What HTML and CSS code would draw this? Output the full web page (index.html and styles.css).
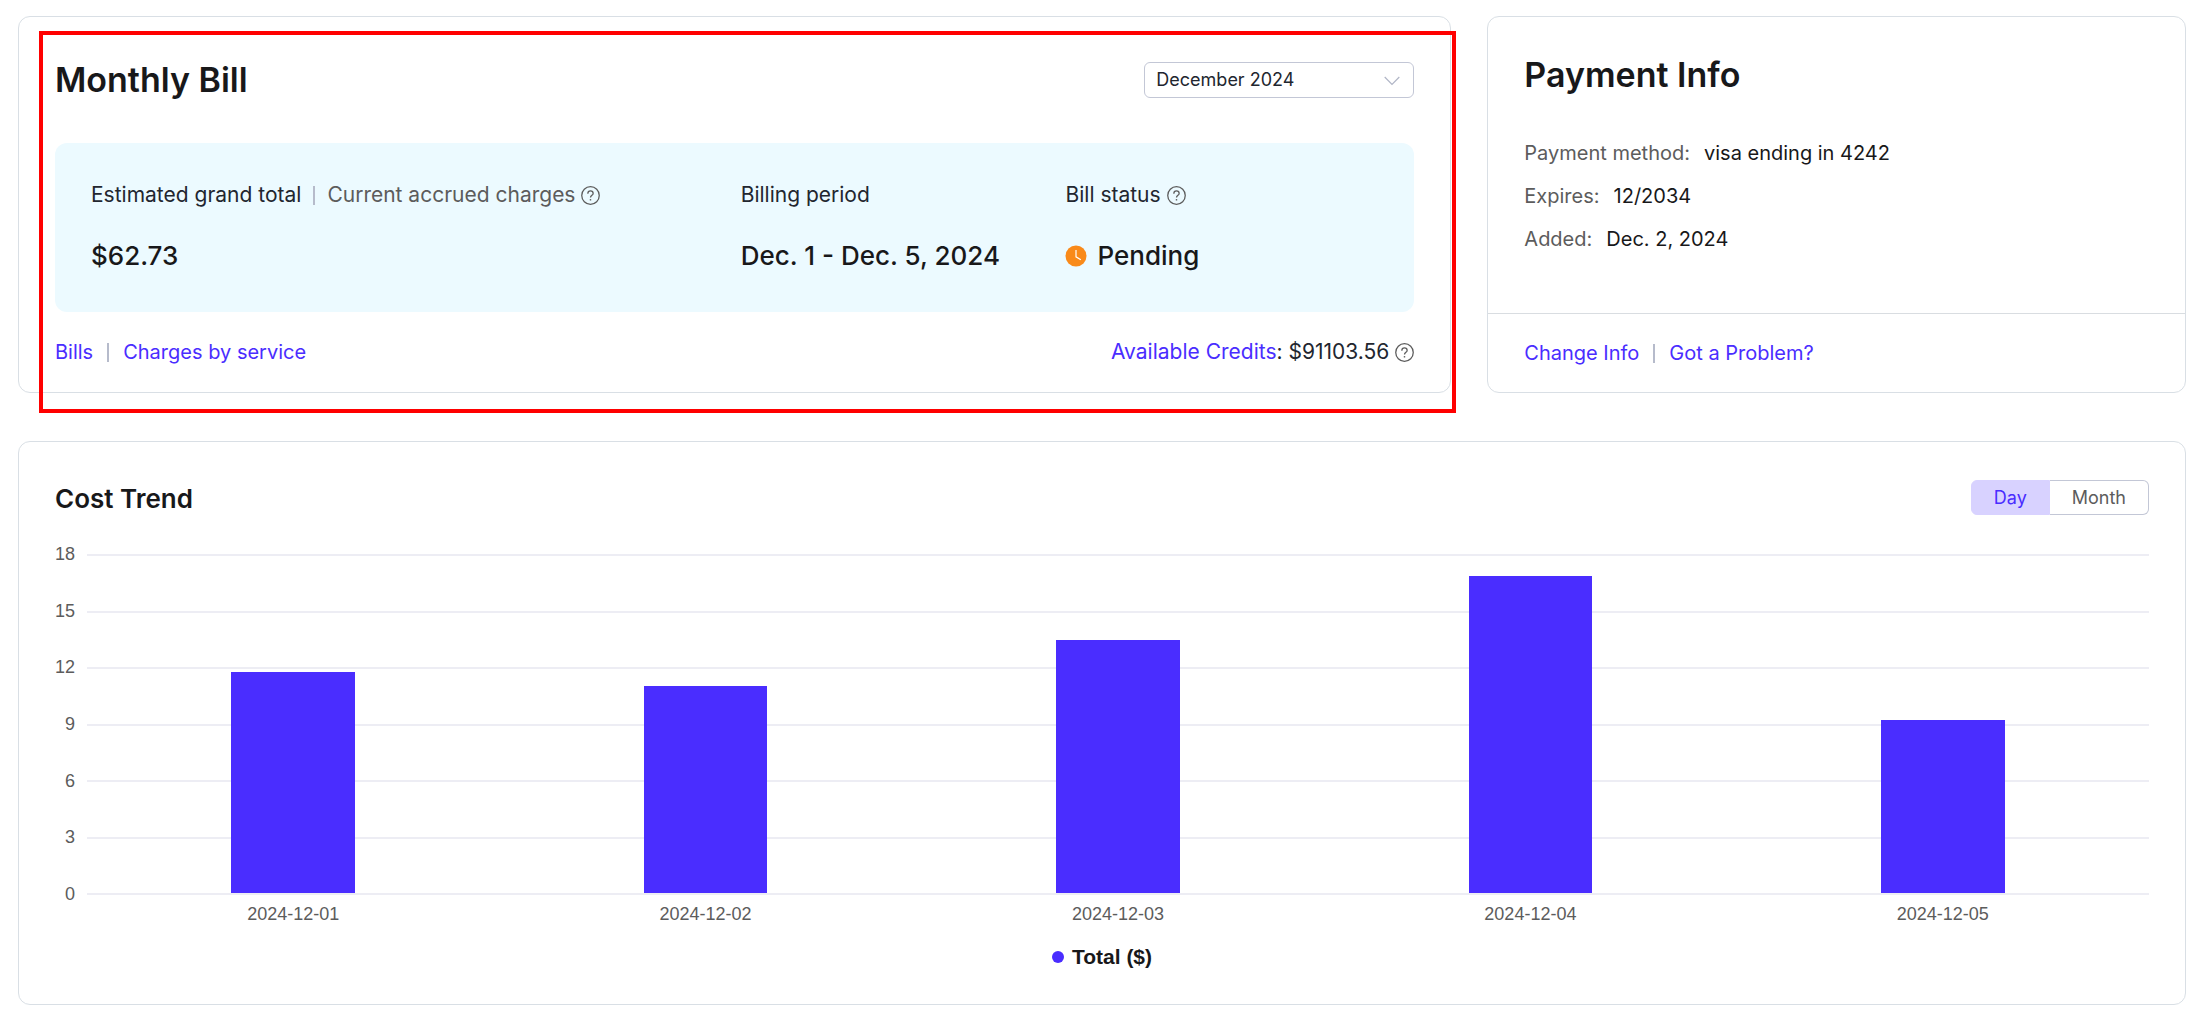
FILE: index.html
```html
<!DOCTYPE html>
<html lang="en">
<head>
<meta charset="utf-8">
<meta name="viewport" content="width=device-width, initial-scale=1">
<title>Billing</title>
<link rel="stylesheet" href="styles.css">
</head>
<body>
<svg class="sprite" aria-hidden="true">
  <symbol id="help" viewBox="0 0 18 18">
    <circle cx="9" cy="9" r="8.3" fill="none" stroke="currentColor" stroke-width="1.2"/>
    <path d="M6.500 7.300V7a2.500 2.300 0 0 1 5 0c0 1.700-2.500 1.900-2.500 3.900" fill="none" stroke="currentColor" stroke-width="1.200"/>
    <circle cx="9" cy="13" r=".8" fill="currentColor"/>
  </symbol>
</svg>
<main class="page">
  <div class="summary">
    <section class="card bill">
      <header class="bill-head">
        <h1 class="title">Monthly Bill</h1>
        <div class="month">
          <select class="month-select" aria-label="Billing month">
            <option>December 2024</option>
          </select>
          <svg class="month-arrow" viewBox="0 0 16 10" aria-hidden="true"><path d="M.7 1 8 8.4 15.300 1" fill="none" stroke="currentColor" stroke-width="1.2"/></svg>
        </div>
      </header>
      <div class="totals">
        <div class="total total-wide">
          <div class="label">Estimated grand total <span class="bar-sep"></span> <span class="muted">Current accrued charges</span> <svg class="help" role="img" aria-label="Help"><use href="#help"/></svg></div>
          <div class="value">$62.73</div>
        </div>
        <div class="total">
          <div class="label">Billing period</div>
          <div class="value">Dec. 1 - Dec. 5, 2024</div>
        </div>
        <div class="total">
          <div class="label">Bill status <svg class="help" role="img" aria-label="Help"><use href="#help"/></svg></div>
          <div class="value">
            <svg class="clock" viewBox="0 0 22 22" aria-hidden="true"><circle cx="11" cy="11" r="10.500" fill="#f98a1a"/><path d="M11 5v6.800l4.800 3" fill="none" stroke="#fff" stroke-width="1.200"/></svg>
            Pending
          </div>
        </div>
      </div>
      <footer class="bill-foot">
        <nav class="links"><a href="#bills">Bills</a><span class="bar-sep"></span><a href="#charges">Charges by service</a></nav>
        <div class="credits"><span><a href="#credits">Available Credits</a>: $91103.56</span><svg class="help" role="img" aria-label="Help"><use href="#help"/></svg></div>
      </footer>
      <div class="highlight"></div>
    </section>

    <section class="card payment">
      <div class="payment-body">
        <h2 class="title">Payment Info</h2>
        <dl class="details">
          <div class="detail"><dt>Payment method:</dt><dd>visa ending in 4242</dd></div>
          <div class="detail"><dt>Expires:</dt><dd>12/2034</dd></div>
          <div class="detail"><dt>Added:</dt><dd>Dec. 2, 2024</dd></div>
        </dl>
      </div>
      <nav class="links payment-foot"><a href="#change">Change Info</a><span class="bar-sep"></span><a href="#problem">Got a Problem?</a></nav>
    </section>
  </div>

  <section class="card trend">
    <header class="trend-head">
      <h2 class="subtitle">Cost Trend</h2>
      <div class="toggle" role="radiogroup" aria-label="Interval">
        <input type="radio" name="interval" id="day" checked><label for="day">Day</label>
        <input type="radio" name="interval" id="month"><label for="month">Month</label>
      </div>
    </header>
    <div class="chart">
      <div class="y-axis"><span>18</span><span>15</span><span>12</span><span>9</span><span>6</span><span>3</span><span>0</span></div>
      <div class="plot">
        <div class="grid-lines"><i></i><i></i><i></i><i></i><i></i><i></i><i></i></div>
        <div class="bars">
          <div class="bar" style="height:65.2%"></div>
          <div class="bar" style="height:61.2%"></div>
          <div class="bar" style="height:74.6%"></div>
          <div class="bar" style="height:93.6%"></div>
          <div class="bar" style="height:51.1%"></div>
        </div>
      </div>
      <div class="x-axis"><span>2024-12-01</span><span>2024-12-02</span><span>2024-12-03</span><span>2024-12-04</span><span>2024-12-05</span></div>
    </div>
    <div class="legend"><span class="dot"></span>Total ($)</div>
  </section>
</main>
</body>
</html>
```
FILE: styles.css
```css
* { box-sizing: border-box; }

body {
  margin: 4px;
  background: #fff;
  color: #22262f;
  font: 20px/28px Inter, "Liberation Sans", sans-serif;
}

h1, h2, dl, dd { margin: 0; }

a { color: #4a2dff; text-decoration: none; }

.sprite { position: absolute; width: 0; height: 0; }

.page {
  display: flex;
  flex-direction: column;
  gap: 48px;
  padding: 12px 2px 21px 14px;
  background: #fff;
  box-shadow: 0 0 0 1px #d9d9d9, 0 0 5px 1px rgba(0, 0, 0, .3);
}

.summary {
  display: grid;
  grid-template-columns: repeat(3, 1fr);
  gap: 36px;
}

.card {
  border: 1px solid #d9dfe5;
  border-radius: 12px;
  background: #fff;
}

.title { font-size: 34px; line-height: 48px; font-weight: 600; color: #18181a; }
.subtitle { font-size: 26px; line-height: 38px; font-weight: 600; color: #18181a; }

.bill {
  position: relative;
  grid-column: span 2;
  padding: 39px 36px 26px;
}

.bill-head, .bill-foot {
  display: flex;
  align-items: center;
  justify-content: space-between;
}

.month { position: relative; width: 270px; }

.month-select {
  display: block;
  appearance: none;
  width: 100%;
  height: 36px;
  padding: 0 11px;
  border: 1px solid #c3c7d6;
  border-radius: 6px;
  background: #fff;
  color: #22262f;
  font: inherit;
  font-size: 18px;
}

.month-arrow {
  position: absolute;
  right: 14px;
  top: 14px;
  width: 16px;
  height: 10px;
  color: #b0b5c6;
  pointer-events: none;
}

.totals {
  display: grid;
  grid-template-columns: repeat(4, 1fr);
  gap: 12px;
  margin: 39px 0 26px;
  padding: 38px 36px;
  border-radius: 12px;
  background: #ecfaff;
}

.total { display: flex; flex-direction: column; gap: 29px; white-space: nowrap; }
.total-wide { grid-column: span 2; }

.label, .value, .links, .credits, .detail { display: flex; align-items: center; }
.label { gap: 6px; font-size: 21px; }
.value { gap: 10px; line-height: 36px; font-size: 26px; font-weight: 500; color: #18181a; }
.muted { color: #5c5c5c; }

.bar-sep { width: 2px; height: 19px; margin: 0 6px; background: #b6bbcb; }
.links .bar-sep { margin: 0 14px; }

.help { width: 19px; height: 19px; color: #5c5c5c; }
.clock { width: 22px; height: 22px; }

.credits { gap: 6px; font-size: 21px; }

.highlight {
  position: absolute;
  inset: 14px -6px -21px 20px;
  border: 4px solid #f00;
  pointer-events: none;
}

.payment { display: flex; flex-direction: column; }
.payment-body { flex: 1; padding: 34px 36px; }
.details { display: flex; flex-direction: column; gap: 15px; margin-top: 40px; }
.detail { gap: 14px; }
.detail dt { color: #5c5c5c; }
.detail dd { color: #18181a; }
.payment-foot { height: 79px; padding: 0 36px; border-top: 1px solid #d9dde1; }

.trend { padding: 38px 36px 33px; }

.trend-head { display: flex; align-items: flex-start; justify-content: space-between; }

.toggle { display: flex; font-size: 18px; line-height: 33px; color: #5c5c5c; }
.toggle input { position: absolute; opacity: 0; }
.toggle label { padding: 0 22px; border: 1px solid #c3c7d6; border-left: 0; border-radius: 0 6px 6px 0; }
.toggle label:first-of-type { border-left: 1px solid #c3c7d6; border-radius: 6px 0 0 6px; }
.toggle input:checked + label { border-color: #d8d2ff; background: #d8d2ff; color: #4a2dff; }

.chart {
  display: grid;
  grid-template-columns: 20px 1fr;
  column-gap: 12px;
  margin-top: 25px;
  color: #5c5c5c;
  font: 18px/22px "Liberation Sans", Arial, sans-serif;
}

.y-axis {
  display: flex;
  flex-direction: column;
  justify-content: space-between;
  height: 362px;
  text-align: right;
}

.plot { display: grid; padding: 11px 0 10px; }
.grid-lines, .bars { grid-area: 1 / 1; }
.grid-lines { display: flex; flex-direction: column; justify-content: space-between; }
.grid-lines i { height: 2px; background: #ededf4; }
.bars { display: flex; align-items: flex-end; justify-content: space-around; padding-bottom: 2px; }
.bar { width: 6%; background: #4a2dff; }

.x-axis { display: grid; grid-template-columns: repeat(5, 1fr); grid-column: 2; text-align: center; line-height: 18px; }

.legend {
  display: flex;
  align-items: center;
  justify-content: center;
  gap: 8px;
  margin-top: 20px;
  color: #18181a;
  font: bold 21px/28px "Liberation Sans", Arial, sans-serif;
}

.dot { width: 12px; height: 12px; border-radius: 50%; background: #4a2dff; }
```
